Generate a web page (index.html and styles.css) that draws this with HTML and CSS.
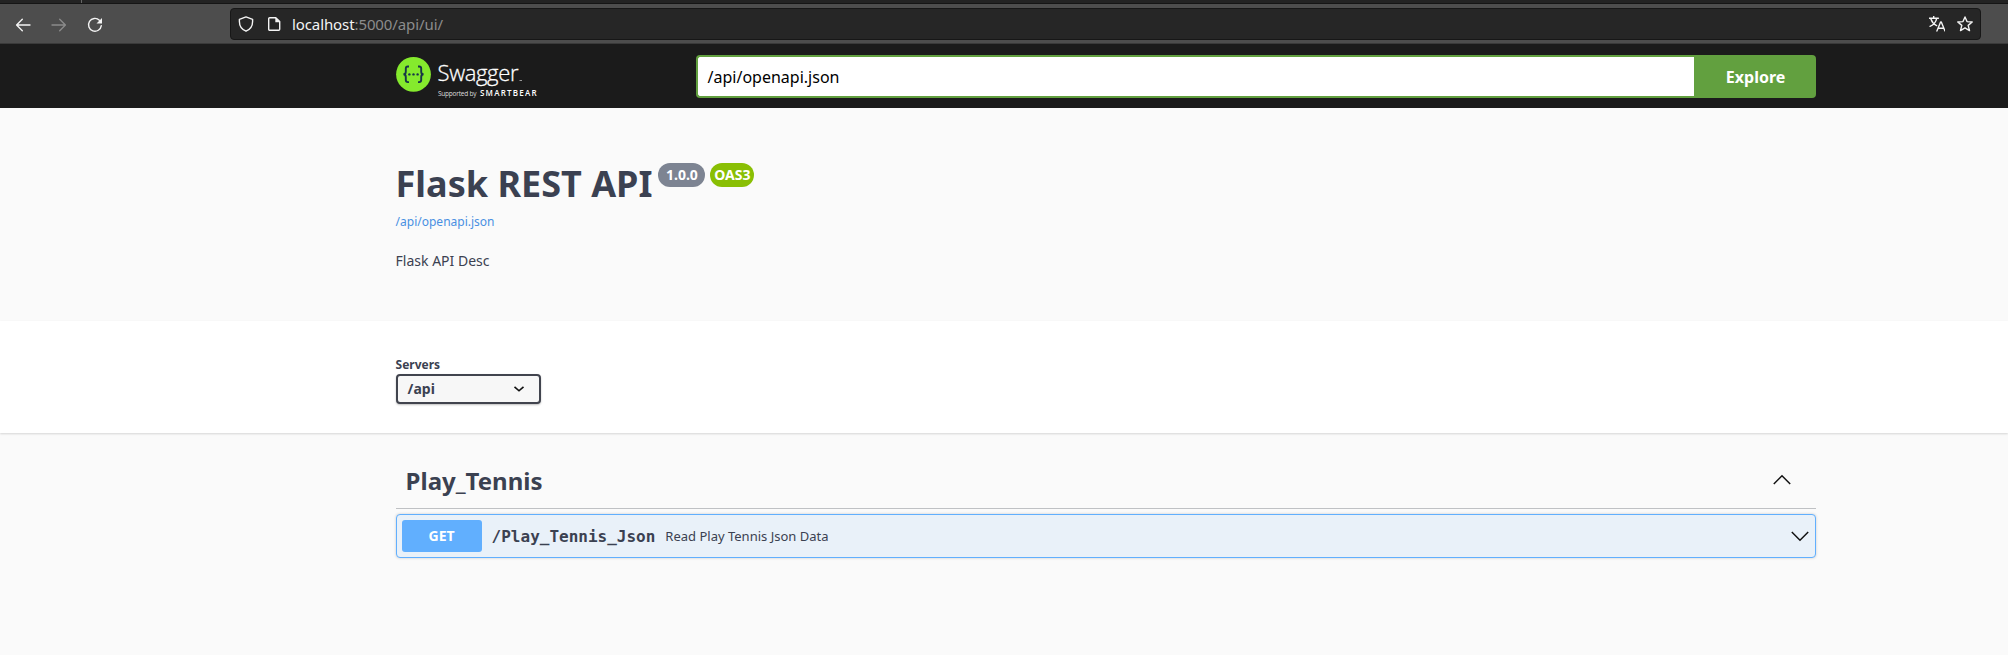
FILE: index.html
```html
<!DOCTYPE html>
<html lang="en">
<head>
<meta charset="utf-8">
<title>Swagger UI</title>
<link rel="stylesheet" href="styles.css">
</head>
<body>
<div class="tabstrip"><span class="tab-divider"></span></div>
<div class="toolbar">
  <div class="nav">
    <svg width="16" height="16" viewBox="0 0 16 16" class="stroke"><path d="M15 8H1.800M7.300 2.300 1.600 8l5.700 5.700"/></svg>
    <svg width="16" height="16" viewBox="0 0 16 16" class="stroke disabled"><path d="M1 8h13.200M8.700 2.300 14.400 8l-5.700 5.700"/></svg>
    <svg width="16" height="16" viewBox="0 0 16 16" class="stroke"><path d="M12.400 3.200A6.400 6.400 0 1 0 14.300 8.600"/><path class="solid" d="M15 1v5.500H9.500z"/></svg>
  </div>
  <div class="urlbar">
    <svg width="16" height="16" viewBox="0 0 16 16" class="stroke"><path d="M8 .9 14.600 3.300v2.200c0 4.400-2.500 8-6.600 9.700C3.900 13.500 1.400 9.900 1.400 5.500V3.300z"/></svg>
    <svg width="16" height="16" viewBox="0 0 16 16" class="stroke page"><path d="M3.700 1.700h6.100l3.900 3.900v7.700a1 1 0 0 1-1 1h-9a1 1 0 0 1-1-1V2.700a1 1 0 0 1 1-1z"/><path class="solid" d="M9.300 1.500v4.700H14z"/></svg>
    <span class="url"><b>localhost</b>:5000/api/ui/</span>
    <svg width="16" height="16" viewBox="0 0 16 16" class="stroke translate"><path d="M0 2.200h9.400M4.700.2v2M2 3.200C3 6 5 8.300 7.600 9.600M7.700 2.400C7 6 4.500 8.900 1 10.300"/><path d="M7.900 15 11.600 6h.7L16 15M9.200 12.200h5.400"/></svg>
    <svg width="16" height="16" viewBox="0 0 16 16" class="stroke"><path d="M8 .9l2 4.700 5.200.4-4 3.400 1.300 5.200L8 11.900l-4.500 2.700 1.300-5.200-4-3.400L6 5.600z"/></svg>
  </div>
</div>
<header class="topbar">
  <div class="wrapper topbar-inner">
    <svg class="logo" width="144" height="44" viewBox="0 0 144 44">
      <circle cx="17.500" cy="20.300" r="17.400" fill="#85ea2d"/>
      <g fill="none" stroke="#173647" stroke-width="1.900">
        <path d="M13 12.500h-1.200q-2 0-2 2v3.200q0 2.600-2.400 2.600 2.400 0 2.400 2.600v3.200q0 2 2 2h1.200"/>
        <path d="M22 12.500h1.200q2 0 2 2v3.200q0 2.600 2.400 2.600-2.400 0-2.400 2.600v3.200q0 2-2 2h-1.200"/>
      </g>
      <g fill="#173647"><circle cx="13.400" cy="20.400" r="1.200"/><circle cx="17.500" cy="20.400" r="1.200"/><circle cx="21.600" cy="20.400" r="1.200"/></g>
      <text class="logo-name" x="41.500" y="27" textLength="81">Swagger</text>
      <path d="M123.500 26.500h2.500" stroke="#999"/>
      <text class="logo-by" x="42" y="41.500" textLength="38.500">Supported by</text>
      <text class="logo-brand" x="84" y="41.500" textLength="56.500">SMARTBEAR</text>
    </svg>
    <div class="search"><div class="search-input">/api/openapi.json</div><div class="explore">Explore</div></div>
  </div>
</header>
<section class="wrapper info">
  <div class="title-row">
    <h1>Flask REST API</h1>
    <span class="badge version">1.0.0</span>
    <span class="badge oas">OAS3</span>
  </div>
  <a class="spec-link">/api/openapi.json</a>
  <p class="description">Flask API Desc</p>
</section>
<section class="scheme">
  <div class="wrapper">
    <div class="servers-label">Servers</div>
    <div class="select"><span>/api</span><svg width="12" height="8" viewBox="0 0 12 8"><path d="M1.500 1.800 6 5.800l4.500-4" fill="none" stroke="#111" stroke-width="1.600"/></svg></div>
  </div>
</section>
<main class="wrapper">
  <div class="tag"><h2>Play_Tennis</h2><svg width="20" height="12" viewBox="0 0 20 12"><path d="M1.800 10 10 1.800 18.200 10" class="arrow"/></svg></div>
  <div class="operation">
    <span class="method">GET</span>
    <span class="path">/Play_Tennis_Json</span>
    <span class="summary">Read Play Tennis Json Data</span>
    <svg width="20" height="12" viewBox="0 0 20 12"><path d="M1.800 2 10 10.200 18.200 2" class="arrow"/></svg>
  </div>
</main>
</body>
</html>
```
FILE: styles.css
```css
* { box-sizing: border-box; }
body { margin: 0; height: 655px; overflow: hidden; background: #fafafa; color: #3b4151; font-family: "Noto Sans", sans-serif; }
h1, h2, p { margin: 0; }
svg { display: block; flex: none; }
.wrapper { width: 1420px; margin-left: 395.6px; }

.tabstrip { height: 4px; background: #232323; border-bottom: 1px solid #151515; }
.tab-divider { display: block; width: 1px; height: 3px; margin-left: 81px; background: #666; }
.toolbar { height: 40px; background: #4d4d4d; border-bottom: 1px solid #3a3a3a; display: flex; align-items: flex-start; padding: 4px 27px 0 15px; }
.nav { display: flex; gap: 20px; width: 215px; padding-top: 8.5px; }
.stroke { fill: none; stroke: #f4f4f4; stroke-width: 1.4; stroke-linejoin: round; stroke-linecap: round; }
.solid { fill: #f4f4f4; stroke: none; }
.disabled { stroke: #8a8a8a; }
.urlbar { flex: 1; height: 32px; background: #262626; border: 1px solid #171717; border-radius: 4px; display: flex; align-items: center; padding: 0 7px; }
.page { margin: 0 10px 0 12px; }
.url { flex: 1; font-size: 15px; line-height: 30px; color: #8c8c8c; letter-spacing: -.1px; }
.url b { font-weight: 400; color: #f4f4f4; }
.translate { margin-right: 12px; }

.topbar { height: 64px; background: #1b1b1b; }
.topbar-inner { display: flex; padding-top: 11px; }
.logo { margin-top: -1px; margin-right: 156px; }
.logo-name { font: 300 22px "Open Sans", sans-serif; fill: #fff; stroke: #fff; stroke-width: .3px; }
.logo-by { font: 6.5px "Open Sans", sans-serif; fill: #ddd; }
.logo-brand { font: 600 8px "Open Sans", sans-serif; fill: #fff; }
.search { flex: 1; height: 43px; display: flex; }
.search-input { flex: 1; background: #fff; border: 2px solid #62a03f; border-right: 0; border-radius: 4px 0 0 4px; padding-left: 10px; font-size: 16px; line-height: 41px; color: #000; }
.explore { width: 122px; background: #62a03f; border-radius: 0 4px 4px 0; padding-left: 2px; color: #fff; font-size: 16px; font-weight: 700; line-height: 45px; text-align: center; }

.info { height: 213px; padding-top: 55px; }
.title-row { display: flex; align-items: flex-start; height: 40px; }
h1 { font-size: 36px; line-height: 42px; margin-right: 6px; white-space: nowrap; }
.badge { height: 24px; border-radius: 12px; color: #fff; font-size: 14px; font-weight: 700; line-height: 24px; text-align: center; }
.version { width: 47px; background: #7d8492; margin-right: 5px; }
.oas { width: 44px; background: #89bf04; }
.spec-link { display: block; font-size: 12px; line-height: 20px; margin-top: 9px; color: #4990e2; }
.description { font-size: 14px; line-height: 20px; margin-top: 19px; }

.scheme { height: 112px; background: #fff; box-shadow: 0 1px 2px rgba(0,0,0,.15); padding-top: 34px; }
.servers-label { font-size: 12px; font-weight: 700; line-height: 19px; }
.select { width: 145px; height: 30px; border: 2px solid #41444e; border-radius: 4px; background: #f7f7f7; box-shadow: 0 1px 2px rgba(0,0,0,.25); display: flex; align-items: center; justify-content: space-between; padding: 0 14px 0 10px; font-size: 14px; font-weight: 700; line-height: 20px; }

.tag { height: 76px; border-bottom: 1px solid #bfc1c4; display: flex; align-items: center; justify-content: space-between; padding: 19px 24px 0 10px; }
h2 { font-size: 24px; line-height: 33px; }
.arrow { fill: none; stroke: #111; stroke-width: 1.5; }
.operation { height: 44px; margin-top: 5px; border: 1px solid #61affe; border-radius: 4px; background: #e9f1f9; box-shadow: 0 0 3px rgba(0,0,0,.19); display: flex; align-items: center; padding: 0 5px; }
.method { width: 80px; height: 32px; border-radius: 3px; background: #61affe; color: #fff; font-size: 14px; font-weight: 700; line-height: 32px; text-align: center; }
.path { margin-left: 10px; font: 700 16px "DejaVu Sans Mono", monospace; }
.summary { flex: 1; margin-left: 10px; font-size: 13px; }
```
